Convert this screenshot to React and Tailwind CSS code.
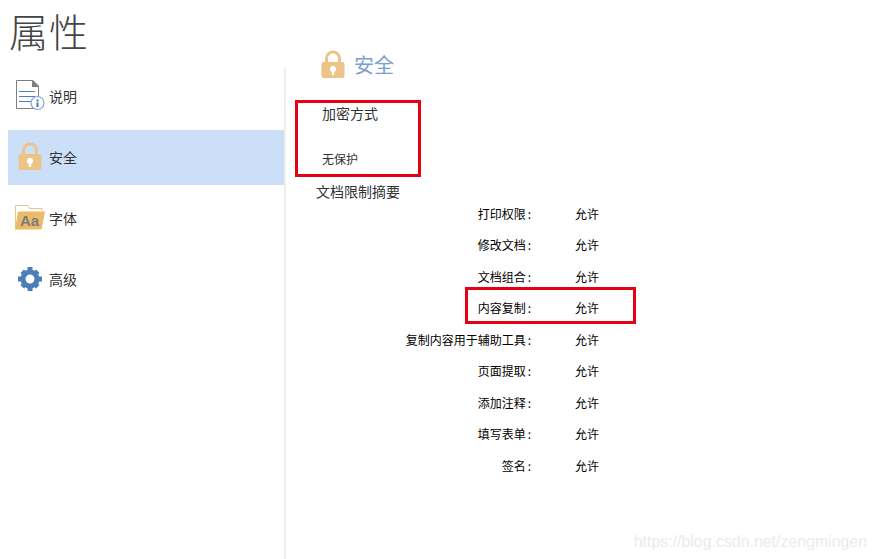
import React from 'react';

const cjk = { fontFamily: '"Noto Sans CJK SC", "Noto Sans", sans-serif' };

const summary = [
  '打印权限',
  '修改文档',
  '文档组合',
  '内容复制',
  '复制内容用于辅助工具',
  '页面提取',
  '添加注释',
  '填写表单',
  '签名',
];

function LockIcon() {
  return (
    <svg className="w-[24px] h-[29px]" viewBox="0 0 24 29" fill="none">
      <path d="M5.5 13V8.5a6.5 6.5 0 0113 0V13" stroke="#ecc487" strokeWidth="3" />
      <rect x="0.5" y="12" width="23" height="16" rx="2" fill="#ecc487" />
      <circle cx="12" cy="19" r="3" fill="#fff" />
      <rect x="10.8" y="19" width="2.4" height="6" fill="#fff" />
    </svg>
  );
}

function DocIcon() {
  return (
    <svg className="w-[30px] h-[31px]" viewBox="-1 0 30 31" fill="none">
      <path d="M0.5 0.5H17L22.5 6V28.5H0.5Z" fill="#fff" stroke="#7f7f7f" />
      <path d="M16 0.5H17L22.5 6V7H16Z" fill="#7f7f7f" />
      <path d="M3 11.5H19M3 16.5H19M3 21.5H16" stroke="#4a80bd" strokeWidth="1" />
      <circle cx="21.5" cy="23" r="6.5" fill="#fff" stroke="#7ea6d6" strokeWidth="1.2" />
      <rect x="20.5" y="19.5" width="2" height="2" fill="#3f78b8" />
      <rect x="20.5" y="22.5" width="2" height="4.5" fill="#3f78b8" />
    </svg>
  );
}

function FontIcon() {
  return (
    <svg className="w-[30px] h-[25px]" viewBox="0 0 30 25" fill="none">
      <path d="M0.5 24V0.5H13L14.5 3.5H27V6" stroke="#ecc487" fill="#fff" />
      <path d="M3 6.5H30L26.5 24.5H0Z" fill="#ecbb69" />
      <text x="5" y="21" fontSize="15" fontWeight="700" fill="#7b7b7b" fontFamily="Liberation Sans, sans-serif">Aa</text>
    </svg>
  );
}

function GearIcon() {
  return (
    <svg className="w-[24px] h-[24px]" viewBox="0 0 24 24" fill="none">
      <circle cx="12" cy="12" r="7" stroke="#4a7fba" strokeWidth="5" />
      <g fill="#4a7fba">
        <rect x="9.5" y="0" width="5" height="5" />
        <rect x="9.5" y="19" width="5" height="5" />
        <rect x="0" y="9.5" width="5" height="5" />
        <rect x="19" y="9.5" width="5" height="5" />
        <rect x="9.5" y="1" width="5" height="5" transform="rotate(45 12 12)" />
        <rect x="9.5" y="18" width="5" height="5" transform="rotate(45 12 12)" />
        <rect x="1" y="9.5" width="5" height="5" transform="rotate(45 12 12)" />
        <rect x="18" y="9.5" width="5" height="5" transform="rotate(45 12 12)" />
      </g>
    </svg>
  );
}

function NavItem({ icon, label, active }) {
  return (
    <div className={`flex items-center h-[55px] w-[276px] pb-[2px] ${active ? 'bg-[#cbdff9]' : ''}`}>
      <div className="w-[41px] flex justify-center pl-[2px] shrink-0">{icon}</div>
      <span className="text-sm text-[#333]">{label}</span>
    </div>
  );
}

export default function App() {
  return (
    <div className="relative flex w-[875px] h-[559px] bg-white overflow-hidden" style={cjk}>
      {/* Sidebar */}
      <div className="w-[286px] shrink-0 flex flex-col">
        <div className="h-[68px] pl-[9px] text-[39px] leading-[61px] tracking-[1px] font-light text-[#444]">属性</div>
        <div className="flex-1 pl-2 pt-px border-r-2 border-[#eeeeee] flex flex-col gap-[6px]">
          <NavItem icon={<DocIcon />} label="说明" />
          <NavItem icon={<LockIcon />} label="安全" active />
          <NavItem icon={<FontIcon />} label="字体" />
          <NavItem icon={<GearIcon />} label="高级" />
        </div>
      </div>

      {/* Main panel */}
      <div className="flex-1 pt-[49px]">
        <div className="flex items-center gap-[9px] pl-[35px] h-[31px]">
          <LockIcon />
          <span className="text-xl text-[#7d9dca]">安全</span>
        </div>
        <div className="pl-[36px] mt-[23px] text-sm leading-5 text-[#333]">加密方式</div>
        <div className="pl-[36px] mt-[26px] text-xs leading-5 text-[#333]">无保护</div>
        <div className="pl-[30px] mt-[12px] text-sm leading-5 text-[#333]">文档限制摘要</div>
        <div className="-mt-[3px] flex flex-col text-xs text-black">
          {summary.map((label) => (
            <div key={label} className="flex items-center h-[31.5px]">
              <div className="w-[245px] text-right">
                {label}
                <span className="ml-[2px]">:</span>
              </div>
              <div className="ml-[44px]">允许</div>
            </div>
          ))}
        </div>
      </div>

      {/* Red annotation boxes */}
      <div className="absolute left-[295px] top-[100px] w-[126px] h-[77px] border-[3px] border-[#e60012]" />
      <div className="absolute left-[465px] top-[287px] w-[171px] h-[37px] border-[3px] border-[#e60012]" />

      {/* Watermark */}
      <div className="absolute right-[8px] top-[530px] text-[15.9px] text-[#ebebeb]" style={{ fontFamily: '"Liberation Sans", sans-serif' }}>
        https://blog.csdn.net/zengmingen
      </div>
    </div>
  );
}
